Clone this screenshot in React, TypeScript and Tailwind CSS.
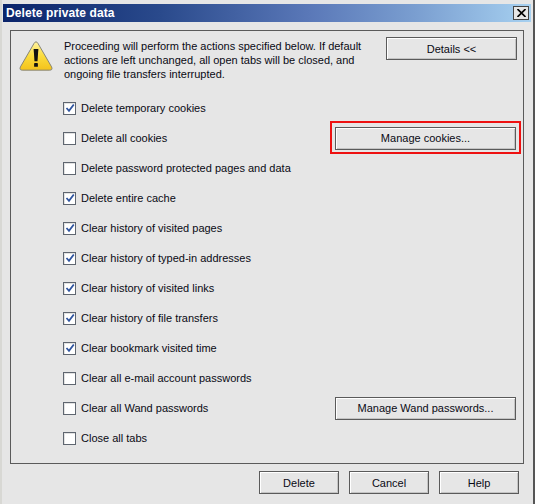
type Row = { t: string; on: boolean; btn?: string; hl?: boolean };
const rows: Row[] = [
  { t: "Delete temporary cookies", on: true },
  { t: "Delete all cookies", on: false, btn: "Manage cookies...", hl: true },
  { t: "Delete password protected pages and data", on: false },
  { t: "Delete entire cache", on: true },
  { t: "Clear history of visited pages", on: true },
  { t: "Clear history of typed-in addresses", on: true },
  { t: "Clear history of visited links", on: true },
  { t: "Clear history of file transfers", on: true },
  { t: "Clear bookmark visited time", on: true },
  { t: "Clear all e-mail account passwords", on: false },
  { t: "Clear all Wand passwords", on: false, btn: "Manage Wand passwords..." },
  { t: "Close all tabs", on: false },
];

function Btn({ label, className }: { label: string; className: string }) {
  return (
    <button className={`flex items-center justify-center border border-[#5a5a5a] bg-[#e6e6e6] shadow-[inset_1px_1px_0_#fff,inset_-1px_-1px_0_#c4c4c4] text-[#0a0a14] ${className}`}>
      {label}
    </button>
  );
}

function Check({ on }: { on: boolean }) {
  return (
    <span className="flex h-[13px] w-[13px] shrink-0 items-center justify-center border border-[#5f6670] bg-white shadow-[inset_1px_1px_0_#e2e2e2]">
      {on && (
        <svg width="10" height="10" viewBox="0 0 10 10" fill="none">
          <path d="M1.5 5 L4 7.8 L8.8 1.5" stroke="#2f549f" strokeWidth="1.8" />
        </svg>
      )}
    </span>
  );
}

function Warn() {
  return (
    <svg width="34" height="32" viewBox="0 0 36 33" className="mt-[3px] shrink-0">
      <defs>
        <linearGradient id="w" x1="0" y1="0" x2="0" y2="1">
          <stop offset="0" stopColor="#fff2a0" />
          <stop offset="0.5" stopColor="#fbdc3c" />
          <stop offset="1" stopColor="#f4c21c" />
        </linearGradient>
      </defs>
      <path d="M18 1.5 Q19 1.5 20 3 L34.5 28 Q36 31.5 32.5 31.5 L3.5 31.5 Q0 31.5 1.5 28 L16 3 Q17 1.5 18 1.5 Z" fill="url(#w)" stroke="#808076" strokeWidth="1" />
      <path d="M15.5 9 H20.5 L19.6 22 H16.4 Z" fill="#111" />
      <rect x="16" y="24" width="4" height="4" rx="0.5" fill="#111" />
    </svg>
  );
}

export default function App() {
  return (
    <div className="flex h-[504px] w-[535px] flex-col overflow-hidden border-l-2 border-r-2 border-l-[#d8d8d4] border-r-[#555] bg-[#e6e6e6] pt-[4px] pl-[1px] font-['Liberation_Sans',sans-serif] text-[11px] leading-[14px] text-[#0a0a14]">
      <div className="mr-[2px] flex h-[18px] shrink-0 items-center justify-between bg-[linear-gradient(90deg,#0a246a_0%,#2a4a8c_30%,#5a78b8_58%,#7a9ed0_78%,#a6d0f0_100%)] pl-[3px] pr-[2px]">
        <span className="text-[12px] font-bold tracking-[0.1px] text-white">Delete private data</span>
        <span className="flex h-[14px] w-[16px] items-center justify-center border border-[#444] bg-[#e6e6e6]">
          <svg width="9" height="8" viewBox="0 0 9 8" fill="none">
            <path d="M0.5 0 L8.5 8 M8.5 0 L0.5 8" stroke="#000" strokeWidth="1.6" />
          </svg>
        </span>
      </div>
      <div className="ml-[7px] mt-[8px] flex h-[434px] w-[514px] flex-col border border-[#5a5a5a] pl-[8px] pr-[6px] pt-[6px]">
        <div className="flex h-[44px]">
          <Warn />
          <p className="ml-[11px] mt-[2px] w-[322px]">
            Proceeding will perform the actions specified below. If default
            <br />
            actions are left unchanged, all open tabs will be closed, and
            <br />
            ongoing file transfers interrupted.
          </p>
          <Btn label="Details <<" className="ml-auto h-[23px] w-[131px]" />
        </div>
        <div className="mt-[12px] flex flex-col pl-[44px]">
          {rows.map((r) => (
            <div key={r.t} className="flex h-[30px] items-center gap-[5px]">
              <Check on={r.on} />
              <span>{r.t}</span>
              {r.btn && (
                <div className="relative ml-auto mr-[1px]">
                  <Btn label={r.btn} className="h-[23px] w-[181px]" />
                  {r.hl && (
                    <span className="absolute -bottom-[4px] -left-[5px] -right-[5px] -top-[6px] border-2 border-[#ee1111]" />
                  )}
                </div>
              )}
            </div>
          ))}
        </div>
      </div>
      <div className="ml-[256px] mt-[7px] flex gap-[10px]">
        <Btn label="Delete" className="h-[23px] w-[80px]" />
        <Btn label="Cancel" className="h-[23px] w-[80px]" />
        <Btn label="Help" className="h-[23px] w-[80px]" />
      </div>
    </div>
  );
}
